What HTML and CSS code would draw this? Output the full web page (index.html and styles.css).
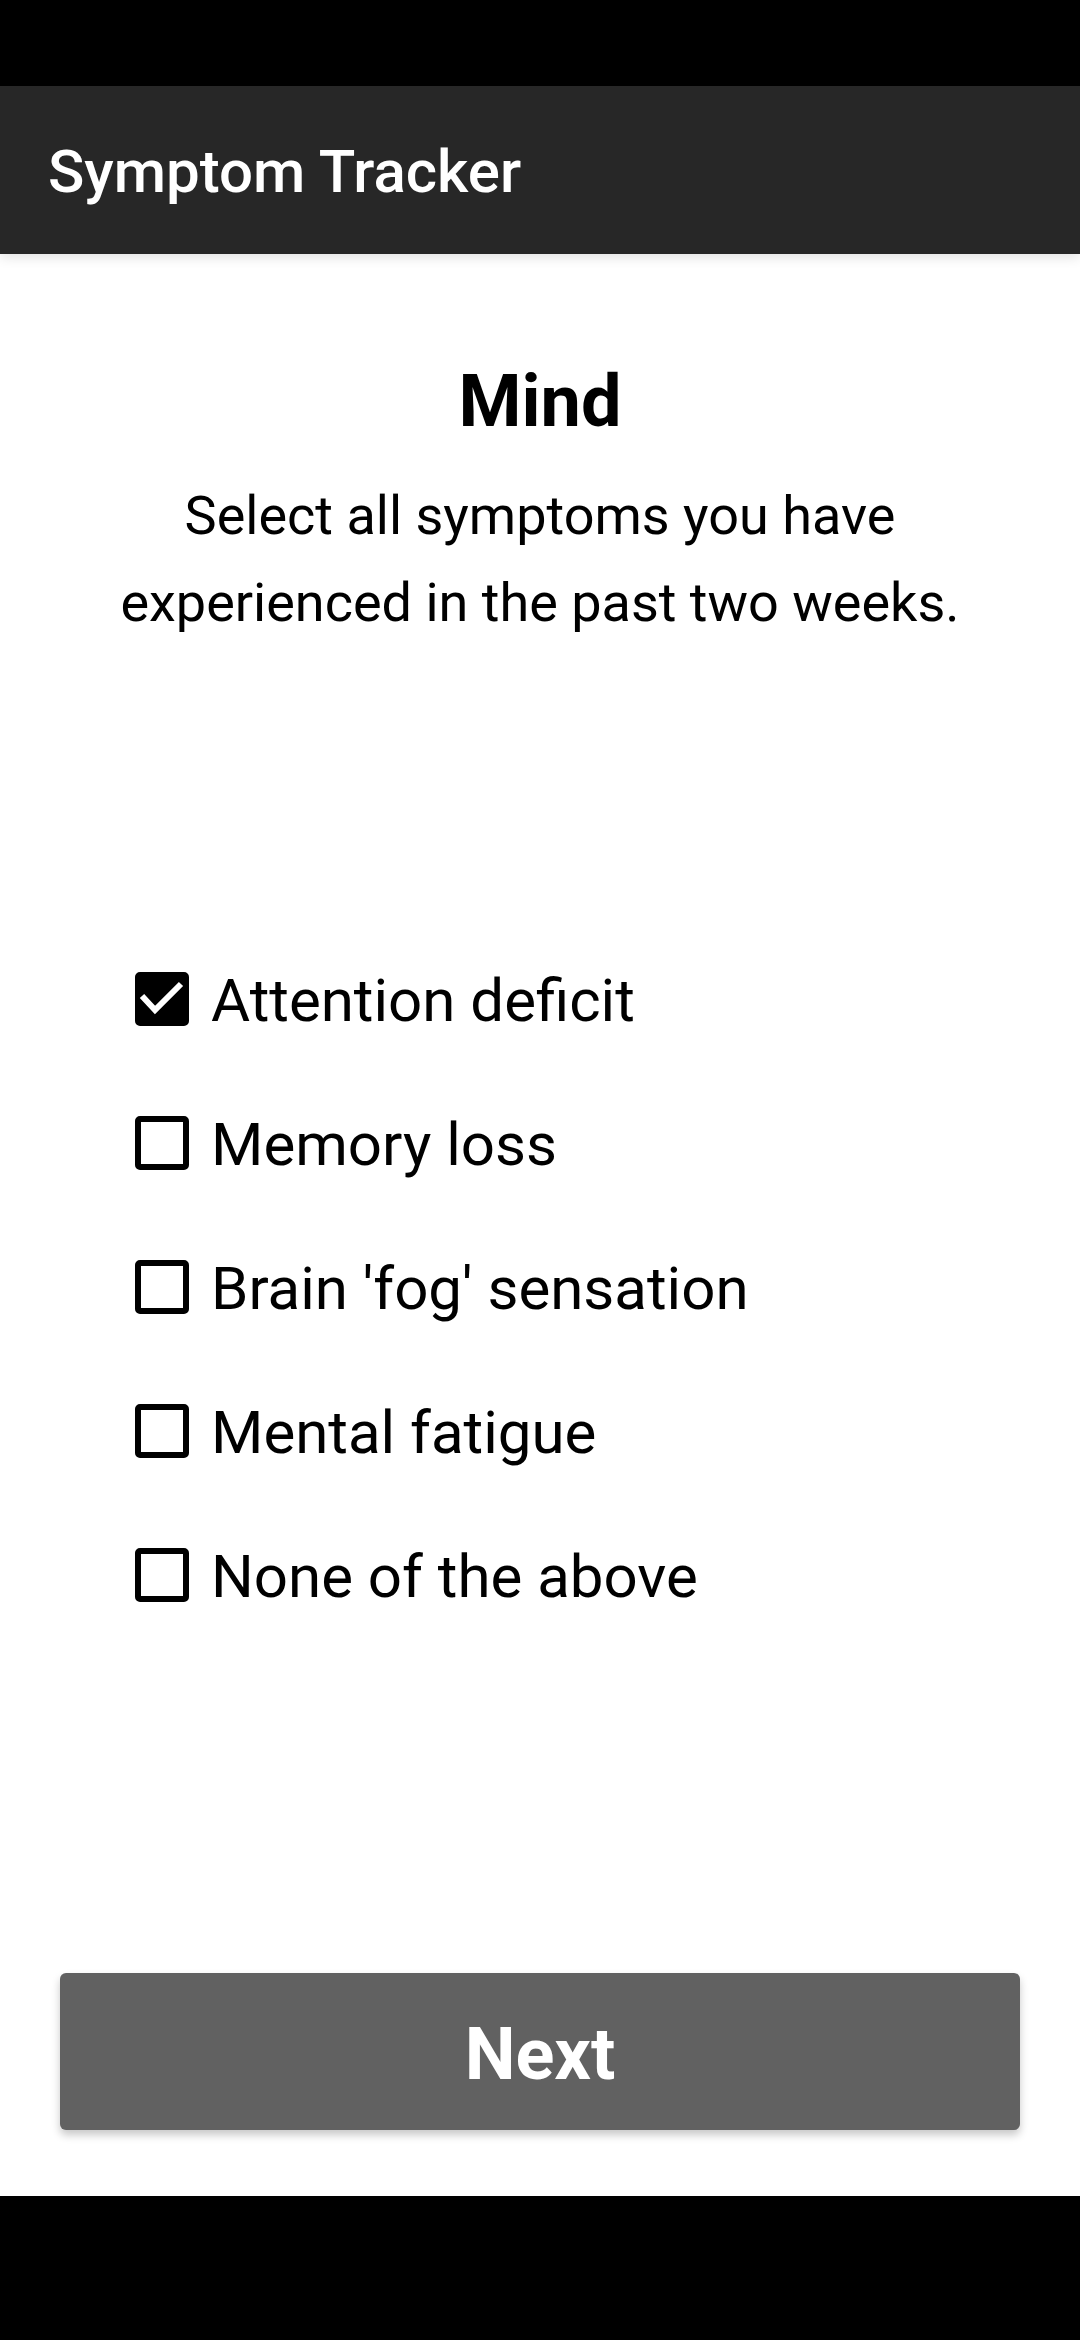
FILE: index.html
```html
<!DOCTYPE html>
<html lang="en">
<head>
<meta charset="utf-8">
<title>Symptom Tracker</title>
<link rel="stylesheet" href="styles.css">
</head>
<body>
<div class="screen">
  <div class="status-bar"></div>
  <header class="app-bar">
    <h1 class="app-title">Symptom Tracker</h1>
  </header>
  <main class="content">
    <h2 class="heading">Mind</h2>
    <p class="subtitle">Select all symptoms you have<br>experienced in the past two weeks.</p>
    <ul class="options">
      <li class="option">
        <span class="box checked">
          <svg viewBox="0 0 54 54" width="54" height="54"><path d="M7 24 L20 38 L46 12" fill="none" stroke="#fff" stroke-width="6"/></svg>
        </span>
        <span class="label">Attention deficit</span>
      </li>
      <li class="option"><span class="box"></span><span class="label">Memory loss</span></li>
      <li class="option"><span class="box"></span><span class="label">Brain 'fog' sensation</span></li>
      <li class="option"><span class="box"></span><span class="label">Mental fatigue</span></li>
      <li class="option"><span class="box"></span><span class="label">None of the above</span></li>
    </ul>
    <div class="spacer"></div>
    <button class="next-btn">Next</button>
  </main>
  <div class="nav-bar"></div>
</div>
</body>
</html>
```
FILE: styles.css
```css
html, body {
  margin: 0;
  padding: 0;
  background: #fff;
}
body {
  font-family: Roboto, "Noto Sans", "Liberation Sans", sans-serif;
  color: #000;
}
.screen {
  width: 1080px;
  height: 2340px;
  display: flex;
  flex-direction: column;
}
.status-bar {
  height: 86px;
  background: #000;
  flex: none;
}
.app-bar {
  height: 168px;
  background: #272727;
  flex: none;
  display: flex;
  align-items: center;
  padding-left: 48px;
  box-shadow: 0 3px 12px rgba(0,0,0,0.12);
  position: relative;
  z-index: 1;
}
.app-title {
  margin: 0;
  margin-top: 4px;
  font-size: 60px;
  font-weight: 500;
  color: #fff;
  line-height: 70px;
}
.content {
  flex: 1;
  display: flex;
  flex-direction: column;
  background: #fff;
}
.heading {
  margin: 106px 0 0;
  text-align: center;
  font-size: 72px;
  font-weight: 700;
  line-height: 84px;
}
.subtitle {
  margin: 28px 0 0;
  text-align: center;
  font-size: 54px;
  line-height: 87px;
}
.options {
  list-style: none;
  margin: 280px 0 0;
  padding: 0 0 0 135px;
}
.option {
  height: 144px;
  display: flex;
  align-items: center;
  gap: 22px;
}
.box {
  width: 54px;
  height: 54px;
  box-sizing: border-box;
  border: 6px solid #000;
  border-radius: 5px;
  flex: none;
  margin-top: 2px;
  position: relative;
}
.box.checked {
  background: #000;
}
.box.checked svg {
  position: absolute;
  left: -6px;
  top: -6px;
}
.label {
  font-size: 60px;
  line-height: 70px;
  margin-top: 5px;
}
.spacer {
  flex: 1;
}
.next-btn {
  margin: 0 60px 66px;
  height: 157px;
  border: none;
  border-radius: 6px;
  background: #616161;
  color: #fff;
  font-family: Roboto, "Noto Sans", "Liberation Sans", sans-serif;
  font-size: 72px;
  font-weight: 700;
  box-shadow: 0 5px 8px rgba(0,0,0,0.22);
  padding: 6px 0 0;
}
.nav-bar {
  height: 144px;
  background: #000;
  flex: none;
}
```
